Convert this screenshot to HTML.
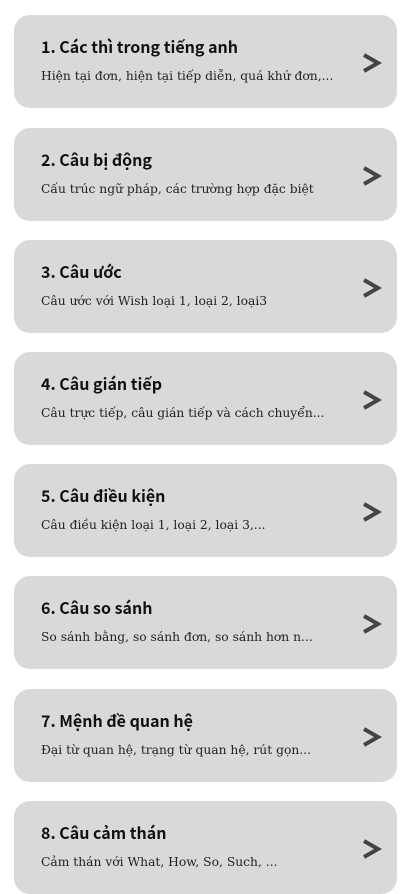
<!DOCTYPE html>
<html><head><meta charset="utf-8"><style>
body{margin:0;background:#fff;width:412px;height:869px;overflow:hidden}
.c{position:absolute;left:14px;width:383px;height:93px;background:#d9d9d9;border-radius:16px}
.t{position:absolute;left:27px;top:20px;font:bold 16px "Noto Sans CJK SC","DejaVu Sans",sans-serif;color:#111;line-height:22px;white-space:nowrap}
.s{position:absolute;left:27px;top:54px;font:12.3px "DejaVu Serif","Liberation Serif",serif;color:#222;white-space:nowrap}
svg{position:absolute;left:348px;top:37px}
</style></head><body>
<div class="c" style="top:15px"><div class="t">1. Các thì trong tiếng anh</div><div class="s">Hiện tại đơn, hiện tại tiếp diễn, quá khứ đơn,...</div><svg width="20" height="22"><path d="M2 3 L16 11 L2 19" fill="none" stroke="#444" stroke-width="4"/></svg></div>
<div class="c" style="top:128px"><div class="t">2. Câu bị động</div><div class="s">Cấu trúc ngữ pháp, các trường hợp đặc biệt</div><svg width="20" height="22"><path d="M2 3 L16 11 L2 19" fill="none" stroke="#444" stroke-width="4"/></svg></div>
<div class="c" style="top:240px"><div class="t">3. Câu ước</div><div class="s">Câu ước với Wish loại 1, loại 2, loại3</div><svg width="20" height="22"><path d="M2 3 L16 11 L2 19" fill="none" stroke="#444" stroke-width="4"/></svg></div>
<div class="c" style="top:352px"><div class="t">4. Câu gián tiếp</div><div class="s">Câu trực tiếp, câu gián tiếp và cách chuyển...</div><svg width="20" height="22"><path d="M2 3 L16 11 L2 19" fill="none" stroke="#444" stroke-width="4"/></svg></div>
<div class="c" style="top:464px"><div class="t">5. Câu điều kiện</div><div class="s">Câu điều kiện loại 1, loại 2, loại 3,...</div><svg width="20" height="22"><path d="M2 3 L16 11 L2 19" fill="none" stroke="#444" stroke-width="4"/></svg></div>
<div class="c" style="top:576px"><div class="t">6. Câu so sánh</div><div class="s">So sánh bằng, so sánh đơn, so sánh hơn n...</div><svg width="20" height="22"><path d="M2 3 L16 11 L2 19" fill="none" stroke="#444" stroke-width="4"/></svg></div>
<div class="c" style="top:689px"><div class="t">7. Mệnh đề quan hệ</div><div class="s">Đại từ quan hệ, trạng từ quan hệ, rút gọn...</div><svg width="20" height="22"><path d="M2 3 L16 11 L2 19" fill="none" stroke="#444" stroke-width="4"/></svg></div>
<div class="c" style="top:801px"><div class="t">8. Câu cảm thán</div><div class="s">Cảm thán với What, How, So, Such, ...</div><svg width="20" height="22"><path d="M2 3 L16 11 L2 19" fill="none" stroke="#444" stroke-width="4"/></svg></div>
</body></html>
